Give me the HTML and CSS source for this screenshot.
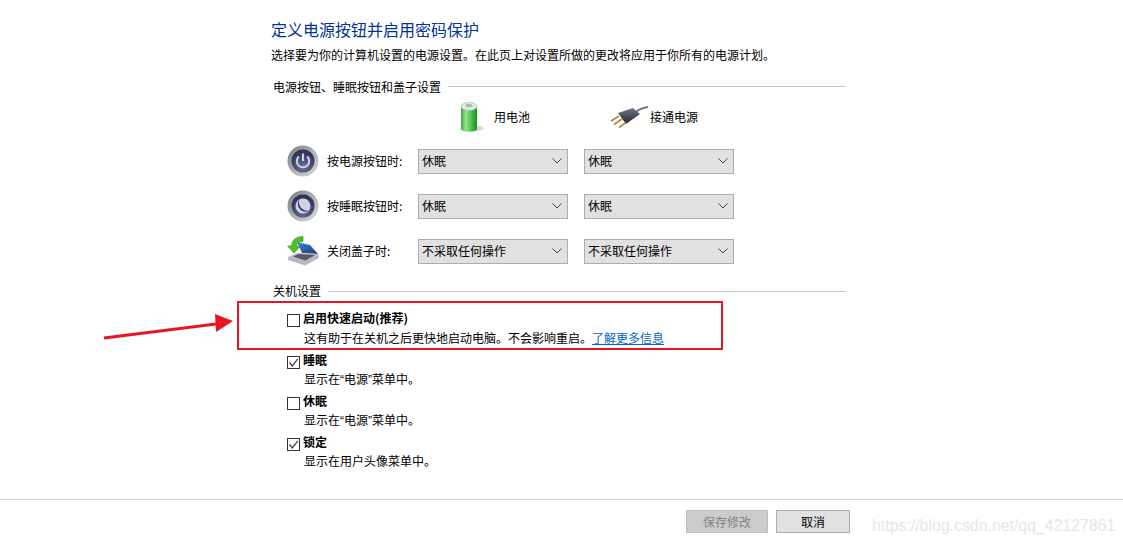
FILE: index.html
```html
<!DOCTYPE html>
<html lang="zh-CN">
<head>
<meta charset="utf-8">
<title>定义电源按钮并启用密码保护</title>
<link rel="stylesheet" href="styles.css">
</head>
<body>
<svg width="0" height="0" class="defs">
  <defs>
    <linearGradient id="batt" x1="0" x2="1" y1="0" y2="0">
      <stop offset="0" stop-color="#3aa53c"/><stop offset=".3" stop-color="#93e58a"/><stop offset=".65" stop-color="#4cc04c"/><stop offset="1" stop-color="#1c8a2a"/>
    </linearGradient>
    <linearGradient id="ring" x1="0" x2="1" y1="0" y2="1">
      <stop offset="0" stop-color="#77777f"/><stop offset=".55" stop-color="#b4b4b8"/><stop offset="1" stop-color="#d8d8da"/>
    </linearGradient>
    <radialGradient id="disc" cx=".5" cy=".75" r=".8">
      <stop offset="0" stop-color="#6c7098"/><stop offset="1" stop-color="#23254a"/>
    </radialGradient>
    <linearGradient id="lid" x1="0" x2="1" y1="0" y2="1">
      <stop offset="0" stop-color="#3f86d8"/><stop offset="1" stop-color="#173a78"/>
    </linearGradient>
    <linearGradient id="plug" x1="0" x2="0" y1="0" y2="1">
      <stop offset="0" stop-color="#6f7488"/><stop offset="1" stop-color="#23252f"/>
    </linearGradient>
  </defs>
</svg>
<main class="page">
  <h1 class="title">定义电源按钮并启用密码保护</h1>
  <p class="intro">选择要为你的计算机设置的电源设置。在此页上对设置所做的更改将应用于你所有的电源计划。</p>

  <div class="section-head first"><span>电源按钮、睡眠按钮和盖子设置</span><i class="rule"></i></div>

  <div class="power-head">
    <div class="power-col battery-col">
      <svg class="head-icon" width="24" height="32" viewBox="0 0 24 32">
        <ellipse cx="15" cy="27.500" rx="9" ry="3" fill="#c4c4c4" opacity=".6"/>
        <path d="M1 5v23c0 3.500 16 3.500 16 0V5z" fill="url(#batt)"/>
        <ellipse cx="9" cy="5.500" rx="8" ry="4" fill="#dfe9e2" stroke="#86c596" stroke-width=".6"/>
        <ellipse cx="9" cy="4.500" rx="3.500" ry="1.600" fill="#a9b6b0"/>
      </svg>
      <span>用电池</span>
    </div>
    <div class="power-col plug-col">
      <svg class="head-icon" width="38" height="24" viewBox="0 0 38 24">
        <path d="M26 7C30 3.500 34 2.500 38 2" fill="none" stroke="#777a82" stroke-width="2"/>
        <path d="M8 8l15-5 7 6-14 10z" fill="url(#plug)"/>
        <path d="M9 11L1 16M12 14l-8 5.500M16 17.500l-7 5" stroke="#b08a3c" stroke-width="1.700" fill="none"/>
      </svg>
      <span>接通电源</span>
    </div>
  </div>

  <div class="power-row">
    <svg class="row-icon" width="32" height="32" viewBox="0 0 32 32">
      <circle cx="16" cy="16" r="15.500" fill="url(#ring)"/>
      <circle cx="16" cy="16" r="11.500" fill="url(#disc)"/>
      <path d="M11.800 11.500a6.200 6.200 0 1 0 8.400 0" fill="none" stroke="#ced3e6" stroke-width="2"/>
      <path d="M16 8.500V16" stroke="#ced3e6" stroke-width="2"/>
    </svg>
    <label class="row-label">按电源按钮时:</label>
    <div class="select"><span>休眠</span><svg class="chev" width="10" height="6" viewBox="0 0 10 6"><path d="M.5.500L5 5 9.500.500" fill="none" stroke="#444"/></svg></div>
    <div class="select"><span>休眠</span><svg class="chev" width="10" height="6" viewBox="0 0 10 6"><path d="M.5.500L5 5 9.500.500" fill="none" stroke="#444"/></svg></div>
  </div>
  <div class="power-row">
    <svg class="row-icon" width="32" height="32" viewBox="0 0 32 32">
      <circle cx="16" cy="16" r="15.500" fill="url(#ring)"/>
      <circle cx="16" cy="16" r="11.500" fill="url(#disc)"/>
      <circle cx="16" cy="16" r="7.500" fill="#ced3e6"/>
      <path d="M14 9a7.500 7.500 0 0 0 6.500 13A8.500 8.500 0 0 1 14 9z" fill="#2b2d52" transform="rotate(-14 16 16)"/>
    </svg>
    <label class="row-label">按睡眠按钮时:</label>
    <div class="select"><span>休眠</span><svg class="chev" width="10" height="6" viewBox="0 0 10 6"><path d="M.5.500L5 5 9.500.500" fill="none" stroke="#444"/></svg></div>
    <div class="select"><span>休眠</span><svg class="chev" width="10" height="6" viewBox="0 0 10 6"><path d="M.5.500L5 5 9.500.500" fill="none" stroke="#444"/></svg></div>
  </div>
  <div class="power-row">
    <svg class="row-icon" width="32" height="32" viewBox="0 0 32 32">
      <path d="M10 7l13 3 8 9-16-1z" fill="url(#lid)"/>
      <path d="M1 22l9-4 21 1 1 4-14 7.500L1 25z" fill="#b6bac0"/>
      <path d="M6 21.500l6-2.500 16 1-9.500 5.500z" fill="#555a62"/>
      <path d="M16 1.500C9 1.500 5 5 4.500 11H.5L7 18l6.500-7H9.500C9.500 8 11.500 6.500 16 6.500z" fill="#4fc02a" stroke="#2c8a1a" stroke-width=".6"/>
    </svg>
    <label class="row-label">关闭盖子时:</label>
    <div class="select"><span>不采取任何操作</span><svg class="chev" width="10" height="6" viewBox="0 0 10 6"><path d="M.5.500L5 5 9.500.500" fill="none" stroke="#444"/></svg></div>
    <div class="select"><span>不采取任何操作</span><svg class="chev" width="10" height="6" viewBox="0 0 10 6"><path d="M.5.500L5 5 9.500.500" fill="none" stroke="#444"/></svg></div>
  </div>

  <div class="section-head second"><span>关机设置</span><i class="rule"></i></div>

  <div class="options">
    <div class="option lead">
      <span class="box"></span>
      <div><div class="opt-title">启用快速启动(推荐)</div><div class="opt-desc">这有助于在关机之后更快地启动电脑。不会影响重启。<a class="link" href="#">了解更多信息</a></div></div>
    </div>
    <div class="option">
      <span class="box"><svg width="11" height="11" viewBox="0 0 11 11"><path d="M1.500 5.500L4.300 9 9.800 1.800" fill="none" stroke="#444" stroke-width="1.300"/></svg></span>
      <div><div class="opt-title">睡眠</div><div class="opt-desc">显示在<span class="q">“</span>电源<span class="q">”</span>菜单中。</div></div>
    </div>
    <div class="option">
      <span class="box"></span>
      <div><div class="opt-title">休眠</div><div class="opt-desc">显示在<span class="q">“</span>电源<span class="q">”</span>菜单中。</div></div>
    </div>
    <div class="option">
      <span class="box"><svg width="11" height="11" viewBox="0 0 11 11"><path d="M1.500 5.500L4.300 9 9.800 1.800" fill="none" stroke="#444" stroke-width="1.300"/></svg></span>
      <div><div class="opt-title">锁定</div><div class="opt-desc">显示在用户头像菜单中。</div></div>
    </div>
  </div>
</main>

<footer class="footer">
  <button class="btn disabled" type="button">保存修改</button>
  <button class="btn" type="button">取消</button>
</footer>

<div class="callout"></div>
<svg class="arrow" width="135" height="30" viewBox="0 0 135 30">
  <path d="M1 28L113 14" stroke="#e8141f" stroke-width="3" fill="none"/>
  <path d="M112 4l18 7-17 11z" fill="#e8141f"/>
</svg>
<div class="watermark">https://blog.csdn.net/qq_42127861</div>
</body>
</html>
```
FILE: styles.css
```css
* { box-sizing: border-box; }
html, body { margin: 0; padding: 0; }
body {
  position: relative;
  width: 1123px;
  height: 544px;
  overflow: hidden;
  background: #fff;
  color: #000;
  font-family: "Noto Sans CJK SC", "Liberation Sans", sans-serif;
  font-size: 12px;
  line-height: 16px;
}
.defs { position: absolute; }
.page { height: 499px; padding: 18px 277px 0 271px; }
.title { margin: 0; font-size: 16px; line-height: 22px; font-weight: 400; color: #003399; }
.intro { margin: 7px 0 0; line-height: 16px; white-space: nowrap; }
.section-head { display: flex; align-items: center; gap: 7px; padding-left: 2px; line-height: 16px; }
.section-head.first { margin-top: 16px; }
.section-head.second { margin-top: -1px; }
.section-head span { white-space: nowrap; }
.rule { flex: 1; height: 1px; background: #c8c8c8; margin-top: -2px; }
.section-head.second .rule { margin-top: 0; }
.power-head { display: flex; height: 32px; margin-top: 6px; padding-left: 189px; }
.power-col { display: flex; align-items: center; }
.head-icon { flex: none; }
.battery-col { width: 150px; gap: 10px; }
.plug-col { gap: 2px; }
.power-row { display: flex; align-items: flex-start; height: 25px; margin-bottom: 20px; padding-left: 16px; }
.power-head + .power-row { margin-top: 16px; }
.row-icon { flex: none; margin: -4px 8px 0 0; overflow: visible; }
.row-label { width: 91px; line-height: 23px; white-space: nowrap; }
.select {
  display: flex; align-items: center; justify-content: space-between;
  width: 150px; height: 25px; margin-right: 16px; padding: 0 5px 1px 3px;
  background: #e1e1e1; border: 1px solid #adadad;
}
.chev { flex: none; }
.options { display: flex; flex-direction: column; margin-top: 11px; padding-left: 16px; }
.option { display: flex; gap: 3px; height: 41px; }
.option.lead { height: 42px; }
.box {
  flex: none; display: flex; align-items: center; justify-content: center;
  width: 13px; height: 13px; margin-top: 4px;
  background: #fff; border: 1px solid #333;
}
.opt-title { font-weight: 700; line-height: 16px; }
.opt-desc { margin-top: 3px; padding-left: 1px; line-height: 16px; white-space: nowrap; }
.lead .opt-desc { margin-top: 4px; }
.q { font-family: "Liberation Sans", sans-serif; }
.link { color: #0066cc; text-decoration: underline; }
.footer {
  display: flex; justify-content: flex-end; gap: 8px;
  height: 45px; padding: 10px 273px 0 0; border-top: 1px solid #cfcfcf;
}
.btn {
  width: 74px; height: 23px; padding: 0;
  font: inherit; color: #000; background: #e1e1e1; border: 1px solid #adadad;
}
.btn.disabled { width: 82px; color: #838383; background: #cccccc; border-color: #bfbfbf; }
.callout { position: absolute; left: 237px; top: 301px; width: 486px; height: 49px; border: 2px solid #e8141f; }
.arrow { position: absolute; left: 103px; top: 310px; }
.watermark {
  position: absolute; left: 872px; top: 517px;
  font-family: "Liberation Sans", sans-serif; font-size: 15.87px; line-height: 18px;
  color: #e6e6e6; white-space: nowrap;
}
```
